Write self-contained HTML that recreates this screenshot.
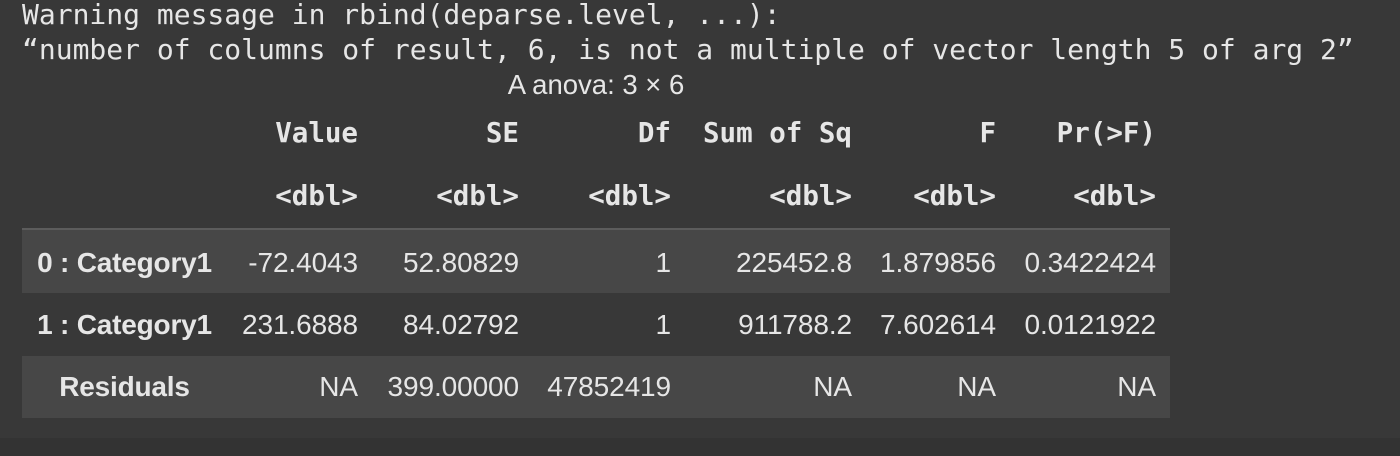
<!DOCTYPE html>
<html><head><meta charset="utf-8"><style>
html,body{margin:0;padding:0;}
body{width:1400px;height:456px;background:#383838;position:relative;overflow:hidden;color:#e6e6e6;}
.m{position:absolute;font-family:"DejaVu Sans Mono","Liberation Mono",monospace;font-size:28px;white-space:pre;line-height:35px;left:22px;}
.cap{position:absolute;left:22px;width:1148px;text-align:center;top:69px;font-family:"Liberation Sans",sans-serif;font-size:27.5px;letter-spacing:0px;}
.h{position:absolute;font-family:"DejaVu Sans Mono",monospace;font-weight:bold;font-size:27.5px;white-space:pre;transform:translateX(-100%);line-height:30px;}
.row{position:absolute;left:22px;width:1148px;height:63px;}
.c{position:absolute;font-family:"Liberation Sans",sans-serif;font-size:28px;letter-spacing:-0.1px;white-space:pre;transform:translateX(-100%);line-height:30px;}
.l{position:absolute;font-family:"Liberation Sans",sans-serif;font-weight:bold;font-size:28px;letter-spacing:-0.2px;white-space:pre;width:205px;left:22px;text-align:center;line-height:30px;}
</style></head><body>
<div class="m" style="top:-3px">Warning message in rbind(deparse.level, ...):</div>
<div class="m" style="top:32px">“number of columns of result, 6, is not a multiple of vector length 5 of arg 2”</div>
<div class="cap">A anova: 3 × 6</div>

<div class="h" style="left:358px;top:118px">Value</div>
<div class="h" style="left:519px;top:118px">SE</div>
<div class="h" style="left:671px;top:118px">Df</div>
<div class="h" style="left:852px;top:118px">Sum of Sq</div>
<div class="h" style="left:996px;top:118px">F</div>
<div class="h" style="left:1156px;top:118px">Pr(&gt;F)</div>
<div class="h" style="left:358px;top:181px">&lt;dbl&gt;</div>
<div class="h" style="left:519px;top:181px">&lt;dbl&gt;</div>
<div class="h" style="left:671px;top:181px">&lt;dbl&gt;</div>
<div class="h" style="left:852px;top:181px">&lt;dbl&gt;</div>
<div class="h" style="left:996px;top:181px">&lt;dbl&gt;</div>
<div class="h" style="left:1156px;top:181px">&lt;dbl&gt;</div>

<div class="row" style="top:228px;height:2px;background:#5c5c5c"></div>
<div class="row" style="top:230px;background:#474747"></div>
<div class="row" style="top:356px;height:62px;background:#474747"></div>
<div style="position:absolute;left:0;top:438px;width:1400px;height:18px;background:#333"></div>

<div class="l" style="top:248px">0 : Category1</div>
<div class="c" style="left:358px;top:248px">-72.4043</div>
<div class="c" style="left:519px;top:248px">52.80829</div>
<div class="c" style="left:671px;top:248px">1</div>
<div class="c" style="left:852px;top:248px">225452.8</div>
<div class="c" style="left:996px;top:248px">1.879856</div>
<div class="c" style="left:1156px;top:248px">0.3422424</div>

<div class="l" style="top:310px">1 : Category1</div>
<div class="c" style="left:358px;top:310px">231.6888</div>
<div class="c" style="left:519px;top:310px">84.02792</div>
<div class="c" style="left:671px;top:310px">1</div>
<div class="c" style="left:852px;top:310px">911788.2</div>
<div class="c" style="left:996px;top:310px">7.602614</div>
<div class="c" style="left:1156px;top:310px">0.0121922</div>

<div class="l" style="top:372px">Residuals</div>
<div class="c" style="left:358px;top:372px">NA</div>
<div class="c" style="left:519px;top:372px">399.00000</div>
<div class="c" style="left:671px;top:372px">47852419</div>
<div class="c" style="left:852px;top:372px">NA</div>
<div class="c" style="left:996px;top:372px">NA</div>
<div class="c" style="left:1156px;top:372px">NA</div>
</body></html>
